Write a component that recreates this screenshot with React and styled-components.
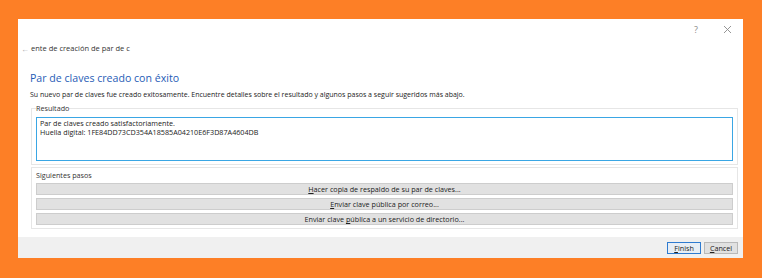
import React from 'react';
import styled, { createGlobalStyle } from 'styled-components';

const GlobalStyle = createGlobalStyle`
  html, body {
    margin: 0;
    padding: 0;
    background: #fd7f26;
  }
  body {
    font-family: "Open Sans", "Noto Sans", sans-serif;
    color: #222;
  }
`;

const Page = styled.div`
  width: 762px;
  height: 278px;
  padding: 19px 19px 0 18px;
  box-sizing: border-box;
`;

const Window = styled.div`
  width: 725px;
  height: 239px;
  background: #fff;
  display: flex;
  flex-direction: column;
`;

const TitleBar = styled.div`
  height: 22px;
  display: flex;
  align-items: center;
  justify-content: flex-end;
  gap: 25px;
  padding-right: 11px;
  color: #8a8a8a;
  font-size: 9px;
`;

const Nav = styled.div`
  display: flex;
  align-items: center;
  gap: 2px;
  height: 16px;
  padding-left: 3px;
  font-size: 7.5px;
  color: #333;
`;

const Arrow = styled.span`
  color: #aaa;
  font-size: 8px;
`;

const Content = styled.div`
  flex: 1;
  display: flex;
  flex-direction: column;
  padding: 0 5px 0 12px;
`;

const Heading = styled.h1`
  margin: 15px 0 0 0;
  font-size: 10.6px;
  font-weight: 400;
  color: #1f5cb6;
  line-height: 14px;
`;

const Description = styled.p`
  margin: 5px 0 0 0;
  font-size: 7px;
  line-height: 10px;
  color: #222;
`;

const Group = styled.fieldset`
  margin: ${(p) => p.$top}px 0 0 1px;
  padding: 0 4px ${(p) => p.$bottom}px 4px;
  border: 1px solid #e6e6e6;
  display: flex;
  flex-direction: column;
  gap: ${(p) => p.$gap || 0}px;
  min-width: 0;
`;

const Legend = styled.legend`
  padding: 0;
  font-size: 7.2px;
  color: #333;
  line-height: 8px;
`;

const Label = styled.div`
  font-size: 7.2px;
  color: #333;
  line-height: 10px;
  padding-top: 2px;
`;

const ResultBox = styled.div`
  margin-top: 5px;
  height: 44px;
  box-sizing: border-box;
  border: 1px solid #3aa6e4;
  padding: 1px 3px;
  font-size: 7.2px;
  line-height: 9px;
  color: #222;
`;

const StepButton = styled.button`
  height: 12px;
  padding: 0;
  border: 1px solid #cdcdcd;
  background: #e1e1e1;
  font-family: inherit;
  font-size: 7.2px;
  line-height: 10px;
  color: #222;
  text-align: center;
`;

const Footer = styled.div`
  height: 21px;
  margin-top: 8px;
  background: #f0f0f0;
  display: flex;
  align-items: center;
  justify-content: flex-end;
  gap: 3px;
  padding-right: 5px;
`;

const DialogButton = styled.button`
  width: ${(p) => p.$width}px;
  height: 12px;
  padding: 0;
  border: 1px solid ${(p) => (p.$primary ? '#2f7bd0' : '#b9b9b9')};
  background: ${(p) => (p.$primary ? '#e8eef5' : '#e1e1e1')};
  font-family: inherit;
  font-size: 7.2px;
  line-height: 10px;
  color: #222;
`;

const CloseIcon = () => (
  <svg width="9" height="9" viewBox="0 0 9 9">
    <path d="M1 1L8 8M8 1L1 8" stroke="#8a8a8a" strokeWidth="0.9" fill="none" />
  </svg>
);

export default function App() {
  return (
    <>
      <GlobalStyle />
      <Page>
        <Window>
          <TitleBar>
            <span>?</span>
            <CloseIcon />
          </TitleBar>
          <Nav>
            <Arrow>←</Arrow>
            <span>ente de creación de par de c</span>
          </Nav>
          <Content>
            <Heading>Par de claves creado con éxito</Heading>
            <Description>
              Su nuevo par de claves fue creado exitosamente. Encuentre detalles sobre el resultado y algunos pasos a seguir sugeridos más abajo.
            </Description>
            <Group $top={4} $bottom={3}>
              <Legend>Resultado</Legend>
              <ResultBox>
                Par de claves creado satisfactoriamente.
                <br />
                Huella digital: 1FE84DD73CD354A18585A04210E6F3D87A4604DB
              </ResultBox>
            </Group>
            <Group as="div" $top={2} $bottom={3} $gap={3}>
              <Label>Siguientes pasos</Label>
              <StepButton>
                <u>H</u>acer copia de respaldo de su par de claves...
              </StepButton>
              <StepButton>
                <u>E</u>nviar clave pública por correo...
              </StepButton>
              <StepButton>
                Enviar clave <u>p</u>ública a un servicio de directorio...
              </StepButton>
            </Group>
          </Content>
          <Footer>
            <DialogButton $primary $width={34}>
              <u>F</u>inish
            </DialogButton>
            <DialogButton $width={34}>
              <u>C</u>ancel
            </DialogButton>
          </Footer>
        </Window>
      </Page>
    </>
  );
}
